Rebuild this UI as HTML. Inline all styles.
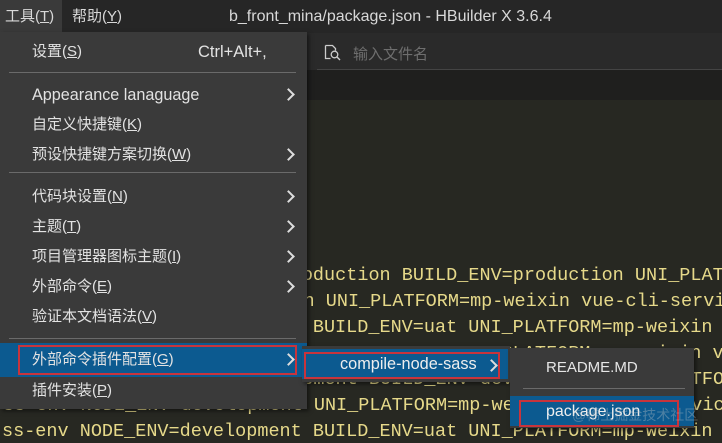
<!DOCTYPE html>
<html><head><meta charset="utf-8"><style>
*{margin:0;padding:0;box-sizing:border-box}
html,body{width:722px;height:443px;overflow:hidden}
body{background:#272822;position:relative;font-family:"Liberation Sans","Noto Sans CJK SC",sans-serif;}
.abs{position:absolute}
.title{left:0;top:0;width:722px;height:33px;background:#262626}
.tb{top:0;height:33px;line-height:34px;font-size:15px;color:#d8d8d8}
.wrap{position:absolute;left:0;top:0;width:722px;height:443px;overflow:hidden}
.code{font-family:"Liberation Mono",monospace;font-size:18.5px;color:#e6d98a;white-space:pre;position:absolute;line-height:20px}
.menu{left:0;top:32px;width:307px;height:377px;background:#3a3a3a;box-shadow:2px 2px 4px rgba(0,0,0,.5)}
.it{position:absolute;left:32px;font-size:15px;color:#e2e2e2;white-space:nowrap;line-height:20px}
.ar{position:absolute;right:14px;width:9px;height:9px;border-right:2px solid #ddd;border-top:2px solid #ddd;transform:rotate(45deg)}
.sep{position:absolute;left:9px;width:287px;height:1px;background:#6a6a6a}
u{text-decoration:underline}
</style></head><body>
<div class="wrap">
<div class="abs title"></div>
<div class="abs" style="left:0;top:0;width:62px;height:33px;background:#3a3a3a"></div>
<div class="abs tb" style="left:5px">工具(<u>T</u>)</div>
<div class="abs tb" style="left:72px">帮助(<u>Y</u>)</div>
<div class="abs tb" style="left:229px;font-size:16px">b_front_mina/package.json - HBuilder X 3.6.4</div>
<div class="abs" style="left:307px;top:33px;width:415px;height:37px;background:#2a2a2a"></div>
<div class="abs" style="left:317px;top:69px;width:405px;height:1px;background:#444"></div>
<div class="abs" style="left:307px;top:70px;width:415px;height:30px;background:#1f1f1e"></div>
<svg class="abs" style="left:324px;top:44px" width="18" height="17" viewBox="0 0 18 17"><path d="M1.5 1.5h7l3 3v2M1.5 1.5v13h5" fill="none" stroke="#ccc" stroke-width="1.3"/><circle cx="10.5" cy="10.5" r="3.3" fill="none" stroke="#ccc" stroke-width="1.3"/><path d="M13 13l3 3" stroke="#ccc" stroke-width="1.4"/></svg>
<div class="abs" style="left:353px;top:43px;font-size:15px;color:#6e6e6e">输入文件名</div>

<div class="code" style="left:102px;top:266px">ss-env NODE_ENV=production BUILD_ENV=production UNI_PLATFORM</div>
<div class="code" style="left:26px;top:292px">ss-env NODE_ENV=production UNI_PLATFORM=mp-weixin vue-cli-service</div>
<div class="code" style="left:2px;top:318px">ss-env NODE_ENV=development BUILD_ENV=uat UNI_PLATFORM=mp-weixin v</div>
<div class="code" style="left:2px;top:344px">ss-env NODE_ENV=production BUILD_ENV=uat UNI_PLATFORM=mp-weixin v</div>
<div class="code" style="left:58px;top:370px">ss-env NODE_ENV=development BUILD_ENV=development UNI_PLATFORM</div>
<div class="code" style="left:3px;top:396px">ss-env NODE_ENV=development UNI_PLATFORM=mp-weixin vue-cli-service</div>
<div class="code" style="left:2px;top:422px">ss-env NODE_ENV=development BUILD_ENV=uat UNI_PLATFORM=mp-weixin v</div>

<div class="abs menu">
<div class="it" style="top:10px">设置(<u>S</u>)</div>
<div class="it" style="top:10px;left:198px;font-size:16.5px">Ctrl+Alt+,</div>
<div class="sep" style="top:40px"></div>
<div class="it" style="top:53px;font-size:16.2px">Appearance lanaguage</div><div class="ar" style="top:58px"></div>
<div class="it" style="top:83px">自定义快捷键(<u>K</u>)</div>
<div class="it" style="top:113px">预设快捷键方案切换(<u>W</u>)</div><div class="ar" style="top:118px"></div>
<div class="sep" style="top:140px"></div>
<div class="it" style="top:155px">代码块设置(<u>N</u>)</div><div class="ar" style="top:160px"></div>
<div class="it" style="top:185px">主题(<u>T</u>)</div><div class="ar" style="top:190px"></div>
<div class="it" style="top:215px">项目管理器图标主题(<u>I</u>)</div><div class="ar" style="top:220px"></div>
<div class="it" style="top:245px">外部命令(<u>E</u>)</div><div class="ar" style="top:250px"></div>
<div class="it" style="top:275px">验证本文档语法(<u>V</u>)</div>
<div class="sep" style="top:306px"></div>
<div class="abs" style="left:0;top:311px;width:307px;height:34px;background:#0c5a90"></div>
<div class="abs" style="left:18px;top:313px;width:279px;height:30px;border:2px solid #c8343c"></div>
<div class="it" style="top:318px">外部命令插件配置(<u>G</u>)</div><div class="ar" style="top:323px"></div>
<div class="it" style="top:349px">插件安装(<u>P</u>)</div>
</div>

<div class="abs" style="left:302px;top:346px;width:208px;height:36px;background:#3a3a3a;box-shadow:2px 2px 4px rgba(0,0,0,.5)"></div>
<div class="abs" style="left:302px;top:349px;width:206px;height:30px;background:#0c5a90"></div>
<div class="abs" style="left:304px;top:352px;width:196px;height:27px;border:2px solid #c8343c"></div>
<div class="abs" style="left:340px;top:355px;font-size:16.3px;color:#eee">compile-node-sass</div>
<div class="ar" style="left:487px;top:361px"></div>

<div class="abs" style="left:510px;top:348px;width:184px;height:80px;background:#3a3a3a;box-shadow:2px 2px 4px rgba(0,0,0,.5)"></div>
<div class="abs" style="left:546px;top:359px;font-size:15px;color:#e6e6e6">README.MD</div>
<div class="abs" style="left:523px;top:388px;width:162px;height:1px;background:#6a6a6a"></div>
<div class="abs" style="left:510px;top:396px;width:184px;height:30px;background:#0c5a90"></div>
<div class="abs" style="left:519px;top:400px;width:160px;height:27px;border:2px solid #c8343c"></div>
<div class="abs" style="left:546px;top:403px;font-size:16px;color:#eee">package.json</div>
<div class="abs" style="left:572px;top:405px;font-size:14px;color:rgba(200,200,200,.35)">@稀土掘金技术社区</div>
</div>
</body></html>
